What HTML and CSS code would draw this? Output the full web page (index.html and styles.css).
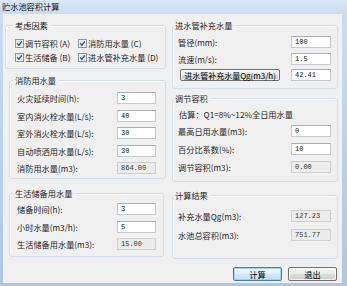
FILE: index.html
```html
<!DOCTYPE html>
<html lang="zh-CN">
<head>
<meta charset="utf-8">
<title>贮水池容积计算</title>
<link rel="stylesheet" href="styles.css">
</head>
<body>
<div class="window">
  <div class="titlebar">贮水池容积计算</div>
  <div class="client">
    <div class="col col-left">
      <fieldset class="group g-factors">
        <legend>考虑因素</legend>
        <div class="checks">
          <label class="chk"><svg class="box" width="9" height="9" viewBox="0 0 9 9"><rect x="0.5" y="0.5" width="8" height="8" fill="#f6f9fc" stroke="#8d99a7"/><rect x="1.5" y="1.5" width="6" height="6" fill="#dde6f0"/><path d="M2.1 4.4 L3.8 6.3 L6.9 2.3" fill="none" stroke="#3a4d7a" stroke-width="1.3"/></svg>调节容积 (A)</label>
          <label class="chk"><svg class="box" width="9" height="9" viewBox="0 0 9 9"><rect x="0.5" y="0.5" width="8" height="8" fill="#f6f9fc" stroke="#8d99a7"/><rect x="1.5" y="1.5" width="6" height="6" fill="#dde6f0"/><path d="M2.1 4.4 L3.8 6.3 L6.9 2.3" fill="none" stroke="#3a4d7a" stroke-width="1.3"/></svg>消防用水量 (C)</label>
          <label class="chk"><svg class="box" width="9" height="9" viewBox="0 0 9 9"><rect x="0.5" y="0.5" width="8" height="8" fill="#f6f9fc" stroke="#8d99a7"/><rect x="1.5" y="1.5" width="6" height="6" fill="#dde6f0"/><path d="M2.1 4.4 L3.8 6.3 L6.9 2.3" fill="none" stroke="#3a4d7a" stroke-width="1.3"/></svg>生活储备 (B)</label>
          <label class="chk"><svg class="box" width="9" height="9" viewBox="0 0 9 9"><rect x="0.5" y="0.5" width="8" height="8" fill="#f6f9fc" stroke="#8d99a7"/><rect x="1.5" y="1.5" width="6" height="6" fill="#dde6f0"/><path d="M2.1 4.4 L3.8 6.3 L6.9 2.3" fill="none" stroke="#3a4d7a" stroke-width="1.3"/></svg>进水管补充水量 (D)</label>
        </div>
      </fieldset>

      <fieldset class="group g-fire">
        <legend>消防用水量</legend>
        <div class="row"><span class="lbl">火灾延续时间(h):</span><span class="field">3</span></div>
        <div class="row"><span class="lbl">室内消火栓水量(L/s):</span><span class="field">40</span></div>
        <div class="row"><span class="lbl">室外消火栓水量(L/s):</span><span class="field">30</span></div>
        <div class="row"><span class="lbl">自动喷洒用水量(L/s):</span><span class="field">30</span></div>
        <div class="row"><span class="lbl">消防用水量(m3):</span><span class="field ro">864.00</span></div>
      </fieldset>

      <fieldset class="group g-life">
        <legend>生活储备用水量</legend>
        <div class="row"><span class="lbl">储备时间(h):</span><span class="field">3</span></div>
        <div class="row"><span class="lbl">小时水量(m3/h):</span><span class="field">5</span></div>
        <div class="row"><span class="lbl">生活储备用水量(m3):</span><span class="field ro">15.00</span></div>
      </fieldset>
    </div>

    <div class="col col-right">
      <fieldset class="group g-inflow">
        <legend>进水管补充水量</legend>
        <div class="row"><span class="lbl">管径(mm):</span><span class="field">100</span></div>
        <div class="row"><span class="lbl">流速(m/s):</span><span class="field">1.5</span></div>
        <div class="row"><span class="btn btn-calc-q">进水管补充水量Qg(m3/h)</span><span class="field">42.41</span></div>
      </fieldset>

      <fieldset class="group g-reg">
        <legend>调节容积</legend>
        <div class="note">估算：Q1=8%~12%全日用水量</div>
        <div class="row"><span class="lbl">最高日用水量(m3):</span><span class="field">0</span></div>
        <div class="row"><span class="lbl">百分比系数(%):</span><span class="field">10</span></div>
        <div class="row"><span class="lbl">调节容积(m3):</span><span class="field ro">0.00</span></div>
      </fieldset>

      <fieldset class="group g-result">
        <legend>计算结果</legend>
        <div class="row"><span class="lbl">补充水量Qg(m3):</span><span class="field ro">127.23</span></div>
        <div class="row"><span class="lbl">水池总容积(m3):</span><span class="field ro">751.77</span></div>
      </fieldset>

      <div class="actions">
        <span class="btn btn-default">计算</span>
        <span class="btn">退出</span>
      </div>
    </div>
  </div>
</div>
</body>
</html>
```

FILE: styles.css
```css
* { box-sizing: border-box; }
html, body { margin: 0; padding: 0; }
body {
  width: 347px;
  height: 286px;
  overflow: hidden;
  font-family: "Noto Sans CJK SC", "Noto Sans", sans-serif;
  font-size: 8.2px;
  color: #262626;
  background: #bcd2ea;
}
.window {
  width: 347px;
  height: 286px;
  background: linear-gradient(to bottom, #dbe8f5 0px, #cadcf0 14px, #b9d0e9 60%, #afc6de 100%);
}
.titlebar {
  height: 14px;
  padding-left: 2px;
  line-height: 12px;
  color: #111;
}
.client {
  margin-left: 3px;
  width: 339px;
  height: 269px;
  background: #f0f0f0;
  display: flex;
  gap: 6px;
  padding: 6px 0 0 2px;
}
.col { display: flex; flex-direction: column; }
.col-left { width: 161px; }
.col-right { width: 166px; }

fieldset.group {
  margin: 0;
  padding: 0;
  min-width: 0;
  border: 1px solid #d5dfe5;
  border-radius: 3px;
  box-shadow: inset 1px 1px 0 #fff;
}
legend {
  padding: 0 2px;
  height: 10px;
  line-height: 10px;
  background: #f0f0f0;
  color: #1f1f1f;
}

/* factors */
.g-factors { height: 49px; padding: 6px 0 0 9px !important; }
.g-factors legend { margin-left: -2px; }
.checks {
  display: grid;
  grid-template-columns: 63px auto;
  grid-auto-rows: 14px;
}
.chk { display: flex; align-items: center; gap: 1px; white-space: nowrap; }
.box { flex: none; }

/* rows */
.row {
  display: flex;
  align-items: center;
  justify-content: space-between;
  height: 12px;
  white-space: nowrap;
}
.lbl { line-height: 12px; }
.field {
  flex: none;
  width: 39px;
  height: 12px;
  background: #fff;
  border: 1px solid #c5c9d0;
  border-top-color: #abadb3;
  font-family: "Liberation Mono", monospace;
  font-size: 7px;
  line-height: 10px;
  padding-left: 3px;
  color: #111;
}
.field.ro {
  background: #ececec;
  border-color: #cfcfcf;
  color: #333;
}

/* fire */
.g-fire {
  margin: 6px 0 0 4px !important;
  width: 157px;
  padding: 7px 9px 4px 7px !important;
  display: flex;
  flex-direction: column;
  gap: 5.5px;
}
.g-fire legend { margin-left: -4px; }

/* life */
.g-life {
  margin: 9px 0 0 4px !important;
  width: 155px;
  padding: 5px 7px 6px 7px !important;
  display: flex;
  flex-direction: column;
  gap: 5.5px;
}
.g-life legend { margin-left: -4px; }

/* right column */
.g-inflow {
  padding: 6px 6px 7px 5px !important;
  display: flex;
  flex-direction: column;
  gap: 4.5px;
}
.g-inflow legend, .g-reg legend, .g-result legend { margin-left: -5px; }
.g-inflow .field, .g-reg .field, .g-result .field { width: 40px; }

.g-reg {
  margin-top: 4px !important;
  padding: 6px 6px 8px 5px !important;
  display: flex;
  flex-direction: column;
  gap: 6px;
}
.note { height: 10px; line-height: 10px; padding-left: 1px; }

.g-result {
  margin-top: 8px !important;
  padding: 10px 6px 17px 5px !important;
  display: flex;
  flex-direction: column;
  gap: 7px;
}

.btn {
  display: flex;
  align-items: center;
  justify-content: center;
  height: 14px;
  border: 1px solid #707070;
  border-radius: 2px;
  background: linear-gradient(to bottom, #f3f3f3 0%, #ebebeb 50%, #dddddd 50%, #cfcfcf 100%);
  box-shadow: inset 0 0 0 1px rgba(255,255,255,0.7);
  color: #000;
  white-space: nowrap;
}
.btn-calc-q {
  margin-left: 2px;
  width: 100px;
  height: 12px;
  font-size: 8px;
}
.actions {
  margin-top: 8px;
  display: flex;
  justify-content: flex-end;
  gap: 6px;
  padding-right: 1px;
}
.actions .btn { width: 49px; }
.btn-default {
  border-color: #3c7fb1;
  background: linear-gradient(to bottom, #f0f7fc 0%, #e5f1fb 50%, #d4e8f8 50%, #c4def4 100%);
  box-shadow: inset 0 0 0 1px #9fd4f5;
}
```
